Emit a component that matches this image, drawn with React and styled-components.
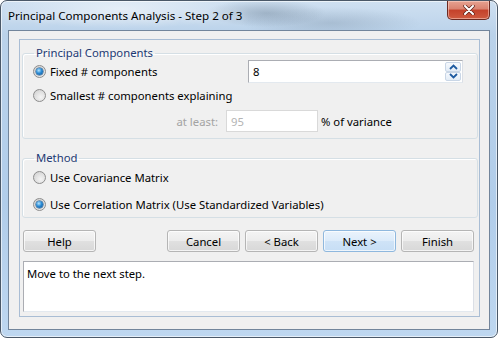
import React from "react";
import styled, { createGlobalStyle } from "styled-components";

const GlobalStyle = createGlobalStyle`
  html, body {
    margin: 0;
    padding: 0;
  }
  body {
    width: 498px;
    height: 338px;
    overflow: hidden;
    background: #ffffff;
    font-family: "Noto Sans", "DejaVu Sans", sans-serif;
    font-size: 11.3px;
    color: #000000;
  }
`;

const Window = styled.div`
  box-sizing: border-box;
  width: 498px;
  height: 338px;
  display: flex;
  flex-direction: column;
  border: 1px solid #4a5868;
  border-radius: 7px;
  background:
    radial-gradient(ellipse 60px 14px at 265px 12px, rgba(70, 90, 110, 0.3), transparent),
    radial-gradient(ellipse 90px 16px at 330px 22px, rgba(80, 100, 120, 0.22), transparent),
    radial-gradient(ellipse 120px 20px at 120px 8px, rgba(255, 255, 255, 0.5), transparent),
    linear-gradient(180deg, #cfe0f1 0%, #bad2ea 10%, #b1cdea 60%, #bed7f0 100%);
  box-shadow: inset 0 0 0 1px rgba(255, 255, 255, 0.6);
  overflow: hidden;
`;

const TitleBar = styled.div`
  height: 29px;
  display: flex;
  align-items: flex-start;
  padding: 0 7px 0 7px;
`;

const Title = styled.div`
  margin-top: 7px;
  font-size: 11.6px;
  color: #000000;
  text-shadow: 0 0 8px rgba(255, 255, 255, 0.9);
`;

const CloseButton = styled.div`
  margin-left: auto;
  width: 43px;
  height: 19px;
  box-sizing: border-box;
  border: 1px solid #6b2a22;
  border-top: none;
  border-radius: 0 0 5px 5px;
  background: linear-gradient(180deg, #e6a291 0%, #d9826f 45%, #c4412a 50%, #cf5a40 100%);
  box-shadow: inset 0 0 0 1px rgba(255, 220, 210, 0.5);
  display: flex;
  align-items: center;
  justify-content: center;
`;

const Client = styled.div`
  flex: 1;
  margin: 0 7px 7px 7px;
  display: flex;
  flex-direction: column;
  background: #f0f0f0;
  border: 1px solid #72859b;
  padding: 8px 9px 12px 10px;
`;

const Panel = styled.div`
  flex: 1;
  display: flex;
  flex-direction: column;
  border: 1px solid #a9bdd4;
  padding: 6px 1px 3px 2px;
`;

const GroupBox = styled.fieldset`
  margin: ${(p) => p.$top || 0}px 0 0 0;
  padding: 0 10px 0 10px;
  border: 1px solid #d5dfe5;
  border-radius: 3px;
  box-shadow: inset 1px 1px 0 #ffffff;
  height: ${(p) => p.$height}px;
  box-sizing: border-box;
`;

const Legend = styled.legend`
  margin-left: 1px;
  padding: 0 2px;
  color: #1d3a74;
  line-height: 14px;
`;

const Row = styled.div`
  display: flex;
  align-items: center;
  height: ${(p) => p.$height || 18}px;
  margin-top: ${(p) => p.$top || 0}px;
`;

const RadioLabel = styled.label`
  display: flex;
  align-items: center;
  gap: 4px;
  width: ${(p) => (p.$width ? `${p.$width}px` : "auto")};
  white-space: nowrap;
`;

const RadioDot = styled.span`
  box-sizing: border-box;
  width: 13px;
  height: 13px;
  border-radius: 50%;
  border: 1px solid #8d8d8d;
  background: radial-gradient(circle at 60% 65%, #f4f4f4 0%, #d9d9d9 70%, #c6c6c6 100%);
  display: flex;
  align-items: center;
  justify-content: center;
  flex-shrink: 0;
  &::after {
    content: "";
    width: 7px;
    height: 7px;
    border-radius: 50%;
    display: ${(p) => (p.$checked ? "block" : "none")};
    background: radial-gradient(circle at 40% 35%, #b6e6ff 0%, #2a8ad4 45%, #0d4f8e 100%);
    box-shadow: 0 0 0 0.5px #1b4f7f;
  }
`;

const SpinBox = styled.div`
  box-sizing: border-box;
  width: 215px;
  height: 23px;
  border: 1px solid #abadb3;
  border-right-color: #dbdfe6;
  border-bottom-color: #e3e9ef;
  background: #ffffff;
  display: flex;
  align-items: center;
  padding-left: 4px;
`;

const SpinValue = styled.span`
  flex: 1;
`;

const SpinArrows = styled.div`
  width: 16px;
  height: 19px;
  margin-right: 1px;
  display: flex;
  flex-direction: column;
  justify-content: space-between;
`;

const ArrowBtn = styled.div`
  height: 9px;
  display: flex;
  align-items: center;
  justify-content: center;
  background: linear-gradient(180deg, #f6f9fd, #e3ecf6);
  border: 1px solid #c9d6e6;
  border-radius: 2px;
`;

const Hint = styled.span`
  box-sizing: border-box;
  color: #a3a3a3;
  width: 193px;
  text-align: right;
  padding-right: 8px;
`;

const TextInput = styled.div`
  box-sizing: border-box;
  width: 92px;
  height: 22px;
  border: 1px solid #d9d9d9;
  background: #ffffff;
  color: #b4b4b4;
  padding-left: 4px;
  display: flex;
  align-items: center;
`;

const After = styled.span`
  margin-left: 3px;
`;

const ButtonRow = styled.div`
  display: flex;
  gap: 5px;
  margin-top: 12px;
  padding: 0 4px 0 1px;
`;

const Button = styled.button`
  box-sizing: border-box;
  width: 73px;
  height: 22px;
  margin-left: ${(p) => (p.$push ? "auto" : "0")};
  font-family: inherit;
  font-size: 11.3px;
  color: #000000;
  border-radius: 3px;
  border: 1px solid ${(p) => (p.$default ? "#8fb8de" : "#b5b5b5")};
  background: ${(p) =>
    p.$default
      ? "linear-gradient(180deg, #eaf3fc 0%, #dcebfa 50%, #cfe3f7 51%, #c7def5 100%)"
      : "linear-gradient(180deg, #f4f4f4 0%, #ececec 50%, #e0e0e0 51%, #d8d8d8 100%)"};
  box-shadow: inset 0 0 0 1px rgba(255, 255, 255, 0.7);
  padding: 0;
`;

const Message = styled.div`
  box-sizing: border-box;
  height: 51px;
  margin: 9px 4px 0 1px;
  border: 1px solid #abadb3;
  border-right-color: #dbdfe6;
  border-bottom-color: #e3e9ef;
  background: #ffffff;
  padding: 4px 3px;
  line-height: 16px;
`;

function Radio({ checked, children, width }) {
  return (
    <RadioLabel $width={width}>
      <RadioDot $checked={checked} />
      {children}
    </RadioLabel>
  );
}

function Chevron({ up }) {
  return (
    <svg width="9" height="6" viewBox="0 0 9 6">
      <path
        d={up ? "M1 5 L4.5 1.5 L8 5" : "M1 1 L4.5 4.5 L8 1"}
        fill="none"
        stroke="#1e5aa0"
        strokeWidth="1.8"
      />
    </svg>
  );
}

export default function App() {
  return (
    <>
      <GlobalStyle />
      <Window>
        <TitleBar>
          <Title>Principal Components Analysis - Step 2 of 3</Title>
          <CloseButton>
            <svg width="12" height="10" viewBox="0 0 12 10">
              <path
                d="M2 1 L10 9 M10 1 L2 9"
                stroke="#5a1f16"
                strokeWidth="3.4"
                strokeLinecap="round"
              />
              <path
                d="M2 1 L10 9 M10 1 L2 9"
                stroke="#ffffff"
                strokeWidth="2"
                strokeLinecap="round"
              />
            </svg>
          </CloseButton>
        </TitleBar>
        <Client>
          <Panel>
            <GroupBox $height={93}>
              <Legend>Principal Components</Legend>
              <Row $height={23} $top={0}>
                <Radio checked width={215}>
                  Fixed # components
                </Radio>
                <SpinBox>
                  <SpinValue>8</SpinValue>
                  <SpinArrows>
                    <ArrowBtn>
                      <Chevron up />
                    </ArrowBtn>
                    <ArrowBtn>
                      <Chevron />
                    </ArrowBtn>
                  </SpinArrows>
                </SpinBox>
              </Row>
              <Row $top={3}>
                <Radio>Smallest # components explaining</Radio>
              </Row>
              <Row $height={22} $top={6}>
                <Hint>at least:</Hint>
                <TextInput>95</TextInput>
                <After>% of variance</After>
              </Row>
            </GroupBox>
            <GroupBox $height={67} $top={12}>
              <Legend>Method</Legend>
              <Row $top={3}>
                <Radio>Use Covariance Matrix</Radio>
              </Row>
              <Row $top={9}>
                <Radio checked>Use Correlation Matrix (Use Standardized Variables)</Radio>
              </Row>
            </GroupBox>
            <ButtonRow>
              <Button>Help</Button>
              <Button $push>Cancel</Button>
              <Button>&lt; Back</Button>
              <Button $default>Next &gt;</Button>
              <Button>Finish</Button>
            </ButtonRow>
            <Message>Move to the next step.</Message>
          </Panel>
        </Client>
      </Window>
    </>
  );
}
